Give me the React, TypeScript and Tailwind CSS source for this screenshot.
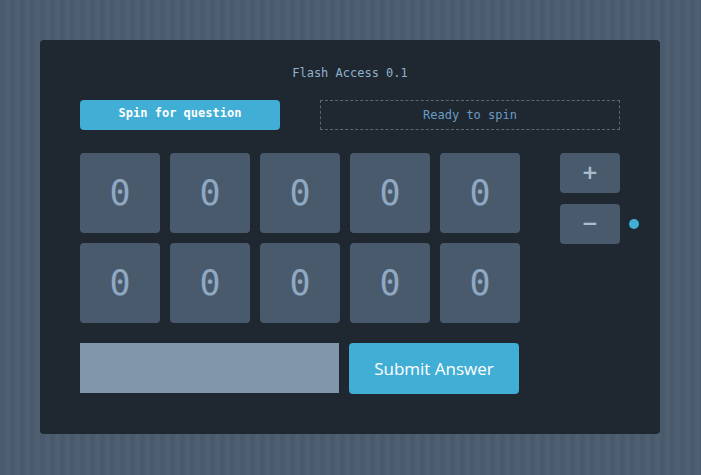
import React from 'react';

const mono = "font-['DejaVu_Sans_Mono',monospace]";

const Tile = ({ value }: { value: number }) => (
    <div className={`w-20 h-20 rounded bg-[#4a5a6d] flex items-center justify-center text-[35px] text-[#8fa9c2] ${mono}`}>
        {value}
    </div>
);

export default function App() {
    const digits = [0, 0, 0, 0, 0, 0, 0, 0, 0, 0];

    return (
        <div className="w-[701px] h-[475px] pt-10 pl-10 bg-[#4b5b6d] bg-[repeating-linear-gradient(90deg,#4a5a6c_0px,#4a5a6c_5px,#4f5f72_5px,#4f5f72_10px)]">
            <div className="w-[620px] h-[394px] rounded bg-[#1f2730] px-10 pt-[25px]">
                <div className={`text-center text-xs text-[#8fb2cc] ${mono}`}>Flash Access 0.1</div>

                <div className="flex mt-[19px] gap-10">
                    <button className={`w-[200px] h-[30px] rounded bg-[#41aed5] text-white text-xs font-bold pb-[4px] ${mono}`}>
                        Spin for question
                    </button>
                    <div className={`w-[300px] h-[30px] border border-dashed border-[#56687a] flex items-center justify-center text-xs text-[#6b9cc4] ${mono}`}>
                        Ready to spin
                    </div>
                </div>

                <div className="flex mt-[23px]">
                    <div className="grid grid-cols-[repeat(5,80px)] gap-[10px] shrink-0">
                        {digits.map((d, i) => (
                            <Tile key={i} value={d} />
                        ))}
                    </div>
                    <div className="flex flex-col gap-[11px] ml-10 shrink-0">
                        <button className="w-[60px] h-10 rounded bg-[#4a5a6d] text-[#a9bdd2] text-xl font-bold font-['DejaVu_Sans',sans-serif] flex items-center justify-center pb-[2px]">+</button>
                        <div className="flex items-center">
                            <button className="w-[60px] h-10 rounded bg-[#4a5a6d] text-[#a9bdd2] text-xl font-bold font-['DejaVu_Sans',sans-serif] flex items-center justify-center pb-[2px]">−</button>
                            <span className="ml-[9px] w-[10px] h-[10px] rounded-full bg-[#41aed5]" />
                        </div>
                    </div>
                </div>

                <div className="flex mt-5 gap-[10px]">
                    <input className="w-[259px] h-[50px] bg-[#8096ab] outline-none" />
                    <button className="w-[170px] h-[51px] rounded bg-[#41aed5] text-white text-[17px] font-['Open_Sans',sans-serif]">
                        Submit Answer
                    </button>
                </div>
            </div>
        </div>
    );
}
